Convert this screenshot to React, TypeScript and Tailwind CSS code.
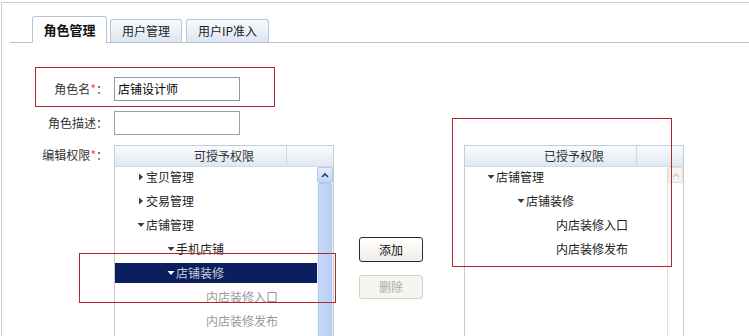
const font = { fontFamily: '"Noto Sans CJK SC", "Liberation Sans", sans-serif' };

type Node = { label: string; level: number; arrow?: "right" | "down"; muted?: boolean; selected?: boolean };

const available: Node[] = [
  { label: "宝贝管理", level: 1, arrow: "right" },
  { label: "交易管理", level: 1, arrow: "right" },
  { label: "店铺管理", level: 1, arrow: "down" },
  { label: "手机店铺", level: 2, arrow: "down" },
  { label: "店铺装修", level: 2, arrow: "down", selected: true },
  { label: "内店装修入口", level: 3, muted: true },
  { label: "内店装修发布", level: 3, muted: true },
];

const granted: Node[] = [
  { label: "店铺管理", level: 1, arrow: "down" },
  { label: "店铺装修", level: 2, arrow: "down" },
  { label: "内店装修入口", level: 3 },
  { label: "内店装修发布", level: 3 },
];

function Arrow({ dir, light }: { dir: "right" | "down"; light?: boolean }) {
  const fill = light ? "#ffffff" : "#3a3a3a";
  return (
    <svg width="8" height="8" viewBox="0 0 8 8" className="mr-[1px] shrink-0">
      {dir === "right" ? <path d="M2 0.5 L6 4 L2 7.5 Z" fill={fill} /> : <path d="M0.5 2 L7.5 2 L4 6 Z" fill={fill} />}
    </svg>
  );
}

function TreeRow({ node }: { node: Node }) {
  const indent = node.level === 1 ? "pl-[22px]" : node.level === 2 ? "pl-[52px]" : "pl-[91px]";
  return (
    <div className="h-[24px]">
      <div
        className={`flex h-[20px] items-center ${indent} ${
          node.selected ? "bg-[#0b1f5f] text-[#c9cdd8]" : node.muted ? "text-[#9a9a9a]" : "text-[#222]"
        }`}
      >
        {node.arrow && <Arrow dir={node.arrow} light={node.selected} />}
        <span className="leading-[16px]">{node.label}</span>
      </div>
    </div>
  );
}

function Panel({ title, nodes, disabled }: { title: string; nodes: Node[]; disabled?: boolean }) {
  return (
    <div className="flex h-[200px] w-[220px] flex-col border border-[#c5ccd4] bg-white">
      <div className="relative flex h-[21px] shrink-0 items-center justify-center border-b border-[#d2d9e0] bg-gradient-to-b from-[#fbfcfe] to-[#dfe7f1] text-[#333]">
        <span>{title}</span>
        <div className="absolute top-0 left-[171px] h-full w-px bg-[#cfd7e1]" />
      </div>
      <div className="flex flex-1">
        <div className="flex-1">
          {nodes.map((n, i) => (
            <TreeRow key={i} node={n} />
          ))}
        </div>
        {disabled ? (
          <div className="flex w-[16px] flex-col border-l border-[#e2e2e2]">
            <div className="flex h-[16px] items-center justify-center rounded-[2px] border border-[#e6dede] bg-[#f6f3f1]">
              <svg width="8" height="6" viewBox="0 0 8 6">
                <path d="M1 5 L4 2 L7 5" stroke="#d8c8c8" strokeWidth="1.6" fill="none" />
              </svg>
            </div>
          </div>
        ) : (
          <div className="flex w-[16px] flex-col bg-[#eef3fb]">
            <div className="flex h-[16px] items-center justify-center rounded-[2px] border border-[#b6c9ea] bg-gradient-to-b from-[#e4edfc] to-[#c4d6f6]">
              <svg width="8" height="6" viewBox="0 0 8 6">
                <path d="M1 5 L4 2 L7 5" stroke="#2b3f6a" strokeWidth="1.6" fill="none" />
              </svg>
            </div>
            <div className="mx-px flex-1 rounded-[2px] border border-[#b3c8ee] bg-gradient-to-r from-[#c8daf8] to-[#b9cff5]" />
          </div>
        )}
      </div>
    </div>
  );
}

function Label({ text, required }: { text: string; required?: boolean }) {
  return (
    <div className="w-[106px] shrink-0 text-right text-[#333]">
      {text}
      {required && <span className="text-[#ff4040]">*</span>}：
    </div>
  );
}

export default function App() {
  return (
    <div className="relative h-[336px] w-[749px] overflow-hidden bg-white text-[12px]" style={font}>
      <div className="mt-[2px] ml-[1px] h-[340px] border-t border-l border-[#c9ced3]">
        {/* tabs */}
        <div className="mt-[13px] ml-[8px] flex items-end gap-[3px] border-b border-[#b3c2cf] pl-[22px]">
          <div className="-mb-px flex h-[27px] w-[75px] items-center justify-center rounded-t-[3px] border border-b-0 border-[#b7c7d6] bg-white text-[13px] font-bold text-[#111]">
            角色管理
          </div>
          <div className="flex h-[23px] w-[72px] items-center justify-center rounded-t-[3px] border border-b-0 border-[#b7c7d6] bg-gradient-to-b from-[#f7fafd] to-[#dce7f2] text-[#222]">
            用户管理
          </div>
          <div className="ml-px flex h-[23px] w-[83px] items-center justify-center rounded-t-[3px] border border-b-0 border-[#b7c7d6] bg-gradient-to-b from-[#f7fafd] to-[#dce7f2] text-[#222]">
            用户IP准入
          </div>
        </div>

        {/* form */}
        <div className="mt-[34px] flex flex-col gap-[10px]">
          <div className="flex items-center gap-[6px]">
            <Label text="角色名" required />
            <div className="flex h-[24px] w-[126px] items-center border border-[#8c9aa6] px-[3px] text-[#000]">店铺设计师</div>
          </div>
          <div className="flex items-center gap-[6px]">
            <Label text="角色描述" />
            <div className="h-[24px] w-[126px] border border-[#8fa3b4]" />
          </div>
          <div className="flex items-start gap-[6px]">
            <div className="pt-[1px]">
              <Label text="编辑权限" required />
            </div>
            <Panel title="可授予权限" nodes={available} />
            <div className="ml-[19px] mt-[92px] flex flex-col gap-[13px]">
              <button className="h-[25px] w-[64px] rounded-[3px] border border-[#1e2c3c] bg-gradient-to-b from-[#ffffff] to-[#efede4] text-[#111]">
                添加
              </button>
              <button className="h-[24px] w-[64px] rounded-[3px] border border-[#d3d0c4] bg-[#f6f5f0] text-[#a8a8a8]">
                删除
              </button>
            </div>
            <div className="ml-[35px]">
              <Panel title="已授予权限" nodes={granted} disabled />
            </div>
          </div>
        </div>
      </div>

      {/* annotation boxes */}
      <div className="absolute top-[67px] left-[35px] h-[40px] w-[240px] border border-[#b3262e]" />
      <div className="absolute top-[253px] left-[79px] h-[50px] w-[257px] border border-[#b3262e]" />
      <div className="absolute top-[118px] left-[452px] h-[149px] w-[220px] border border-[#b3262e]" />
    </div>
  );
}
